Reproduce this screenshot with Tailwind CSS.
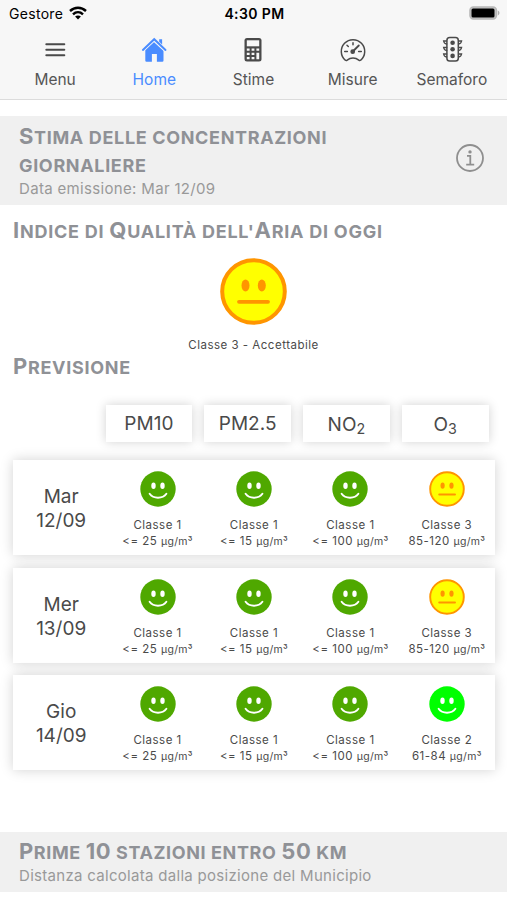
<!DOCTYPE html>
<html lang="it">
<head>
    <meta charset="UTF-8">
    <meta name="viewport" content="width=device-width, initial-scale=1.0">
    <title>Qualità dell'Aria</title>
    <script src="https://cdn.jsdelivr.net/npm/@tailwindcss/browser@4"></script>
</head>
<body class="bg-white font-['Inter','Liberation_Sans',sans-serif] text-[#4a4a4a] h-[900px] overflow-hidden">
    <!-- face symbols -->
    <svg class="hidden">
        <symbol id="happy" viewBox="0 0 36 36">
            <circle cx="18" cy="18" r="17.7" fill="currentColor"/>
            <ellipse cx="13.5" cy="14.7" rx="2.2" ry="3.2" fill="#fff"/>
            <ellipse cx="22.5" cy="14.7" rx="2.2" ry="3.2" fill="#fff"/>
            <path d="M9.6 22.8c3.8 5.2 13 5.2 16.8 0" fill="none" stroke="#fff" stroke-width="1.9" stroke-linecap="round"/>
        </symbol>
        <symbol id="neutral" viewBox="0 0 36 36">
            <circle cx="18" cy="18" r="16.8" fill="#ff0" stroke="#ff9500" stroke-width="1.9"/>
            <ellipse cx="13.6" cy="14.6" rx="2.1" ry="3.2" fill="#ff9500"/>
            <ellipse cx="22.5" cy="14.6" rx="2.1" ry="3.2" fill="#ff9500"/>
            <path d="M10.2 23.5h15.8" stroke="#ff9500" stroke-width="1.9" stroke-linecap="round"/>
        </symbol>
    </svg>

    <header class="h-[100px] bg-[#f7f7f7] border-b border-[#dcdcdc]">
        <div class="grid grid-cols-3 items-center h-7 pl-[9px] pr-[7px] text-black text-sm">
            <div class="flex items-center gap-1.5">
                <span class="tracking-[0.3px]">Gestore</span>
                <svg class="w-[18px] h-[14px] -mt-0.5" viewBox="0 0 18 14" fill="none" stroke="#000" stroke-width="2.4">
                    <path d="M1 5c4.6-4.3 11.4-4.3 16 0"/>
                    <path d="M4 8.3c2.9-2.7 7.1-2.7 10 0"/>
                    <path d="M9 13.5l-2.9-2.9c1.6-1.5 4.2-1.5 5.8 0z" fill="#000" stroke="none"/>
                </svg>
            </div>
            <div class="text-center font-semibold text-sm tracking-[0.4px] whitespace-nowrap">4:30 PM</div>
            <svg class="justify-self-end w-[31px] h-[14px] -mt-0.5" viewBox="0 0 31 14">
                <rect x="1" y="1" width="26.4" height="12" rx="3.4" fill="#c8c8c8" stroke="#b8b8b8" stroke-width="1.6"/>
                <rect x="2.5" y="2.5" width="23" height="9" rx="1.5" fill="#000"/>
                <path d="M28.8 4.6c2.2.8 2.2 4 0 4.8z" fill="#b0b0b0"/>
            </svg>
        </div>
        <nav class="grid grid-cols-5 px-[5.5px] pt-2 text-[15.5px] leading-5 text-[#555]">
            <a href="#" class="flex flex-col items-center gap-1.5">
                <svg class="w-7 h-7" viewBox="0 0 28 28" stroke="#4a4a4a" stroke-width="2" stroke-linecap="round">
                    <path d="M5.3 8.2h18M5.3 13.8h18M5.3 19.2h18"/>
                </svg>
                Menu
            </a>
            <a href="#" class="flex flex-col items-center gap-1.5 text-[#4a8cff]">
                <svg class="w-7 h-7" viewBox="0 0 28 28" fill="#4a8cff">
                    <path d="M14 5.3l9.5 8.6v10.6q0 1.2-1.2 1.2h-5.4v-7.8h-5v7.8H6.5q-1.2 0-1.2-1.2V13.9z"/>
                    <path d="M19.2 3.2h2.9v5.2l-2.9-2.6z"/>
                    <path d="M2.3 14.9L14 4.2l11.7 10.7" fill="none" stroke="#f7f7f7" stroke-width="3"/>
                    <path d="M2.9 13.9L14.2 3.2l11.3 10.7" fill="none" stroke="#4a8cff" stroke-width="2" stroke-linecap="round"/>
                </svg>
                Home
            </a>
            <a href="#" class="flex flex-col items-center gap-1.5">
                <svg class="w-7 h-7" viewBox="0 0 28 28">
                    <rect x="5.5" y="2" width="17" height="23.5" rx="2.5" fill="#4a4a4a"/>
                    <path d="M7.8 4.3h12.4v6H7.8z" fill="#f7f7f7"/>
                    <g fill="#f7f7f7">
                        <path d="M7.8 12.6h2.8v2.2H7.8zM12.6 12.6h2.8v2.2h-2.8zM17.4 12.6h2.8v2.2h-2.8z"/>
                        <path d="M7.8 16.7h2.8v2.2H7.8zM12.6 16.7h2.8v2.2h-2.8zM17.4 16.7h2.8v6.5h-2.8z"/>
                        <path d="M7.8 20.9h2.8v2.3H7.8zM12.6 20.9h2.8v2.3h-2.8z"/>
                    </g>
                </svg>
                Stime
            </a>
            <a href="#" class="flex flex-col items-center gap-1.5">
                <svg class="w-7 h-7" viewBox="0 0 28 28" fill="none" stroke="#4a4a4a" stroke-width="1.5" stroke-linecap="round">
                    <path d="M6.3 24.2a11.7 11.7 0 1 1 15.4 0q-.9.6-1.9-.1c-3.4-2.7-8.2-2.7-11.6 0q-1 .7-1.9.1z"/>
                    <path d="M14 6.7v2M8 9.3l1.3 1.2M5.7 15.5h2.7M19.6 15.5h2.7"/>
                    <path d="M19.8 9.5l-6 6" stroke-width="1.8"/>
                    <circle cx="13.7" cy="15.7" r="1.6" fill="#4a4a4a"/>
                </svg>
                Misure
            </a>
            <a href="#" class="flex flex-col items-center gap-1.5">
                <svg class="w-7 h-7" viewBox="0 0 28 28" fill="none" stroke="#4a4a4a" stroke-width="1.5" stroke-linecap="round">
                    <rect x="8.9" y="1.6" width="11.4" height="23.4" rx="2.8"/>
                    <g fill="#4a4a4a" stroke="none">
                        <circle cx="14.6" cy="6.7" r="2.3"/>
                        <circle cx="14.6" cy="13.3" r="2.3"/>
                        <circle cx="14.6" cy="19.9" r="2.3"/>
                    </g>
                    <path d="M8.7 5H5.6q.4 2.6 3.1 3M8.7 11.5H5.6q.4 2.6 3.1 3M8.7 18H5.6q.4 2.6 3.1 3" stroke-width="1.3"/>
                    <path d="M20.5 5h3.1q-.4 2.6-3.1 3M20.5 11.5h3.1q-.4 2.6-3.1 3M20.5 18h3.1q-.4 2.6-3.1 3" stroke-width="1.3"/>
                </svg>
                Semaforo
            </a>
        </nav>
    </header>

    <section class="flex items-center justify-between mt-4 h-[89px] bg-[#f0f0f0] pl-[19px] pr-[22px] text-[#8f9196]">
        <div class="pt-px">
            <h2 class="w-[340px] text-[18px] leading-7 font-bold tracking-[0.65px] uppercase"><span class="text-[22px] leading-none">S</span>tima delle concentrazioni giornaliere</h2>
            <p class="-mt-px text-[15px] leading-5 tracking-[0.33px] text-[#999]">Data emissione: Mar 12/09</p>
        </div>
        <svg class="w-[30px] h-[30px] -mt-1.5" viewBox="0 0 30 30" fill="none" stroke="#8f8f8f" stroke-width="1.8">
            <circle cx="15" cy="15" r="13"/>
            <path d="M12 12.9h3.3v8.4M11.2 21.7h8"/>
            <circle cx="15" cy="8.9" r="1.7" fill="#8f8f8f" stroke="none"/>
        </svg>
    </section>

    <main class="px-[13px]">
        <h2 class="mt-[13px] text-[18px] leading-7 font-bold tracking-[0.75px] uppercase text-[#8f9196] whitespace-nowrap"><span class="text-[22px] leading-none">I</span>ndice di <span class="text-[22px] leading-none">Q</span>ualità dell'<span class="text-[22px] leading-none">A</span>ria di oggi</h2>
        <div class="flex flex-col items-center mt-3">
            <svg class="w-[67px] h-[67px]" viewBox="0 0 67 67">
                <circle cx="33.5" cy="33.5" r="31.3" fill="#ff0" stroke="#ff9500" stroke-width="4"/>
                <ellipse cx="25.5" cy="27.5" rx="4" ry="6" fill="#ff9500"/>
                <ellipse cx="41.8" cy="27.5" rx="4" ry="6" fill="#ff9500"/>
                <path d="M19 43.8h29" stroke="#ff9500" stroke-width="3.8" stroke-linecap="round"/>
            </svg>
            <p class="mt-3 text-[11.5px] leading-4 tracking-[0.5px]">Classe 3 - Accettabile</p>
        </div>
        <h2 class="mt-px text-[18px] leading-7 font-bold tracking-[0.7px] uppercase text-[#8f9196]"><span class="text-[22px] leading-none">P</span>revisione</h2>

        <div class="grid grid-cols-4 gap-3 mt-[23px] ml-[92.5px] mr-[5.5px] text-[19px]">
            <div class="flex items-center justify-center h-[37px] pt-0.5 bg-white shadow-[0_0_10px_rgba(0,0,0,0.18)]">PM10</div>
            <div class="flex items-center justify-center h-[37px] pt-0.5 bg-white shadow-[0_0_10px_rgba(0,0,0,0.18)]">PM2.5</div>
            <div class="flex items-center justify-center h-[37px] pt-[3px] bg-white shadow-[0_0_10px_rgba(0,0,0,0.18)]"><span>NO<sub>2</sub></span></div>
            <div class="flex items-center justify-center h-[37px] pt-[3px] bg-white shadow-[0_0_10px_rgba(0,0,0,0.18)]"><span>O<sub>3</sub></span></div>
        </div>

        <div id="forecast" class="flex flex-col gap-[12.5px] mt-[18px] -mr-px"></div>
    </main>

    <section class="mt-[62px] h-[60px] pt-[7px] bg-[#f0f0f0] pl-[19px] text-[#8f9196]">
        <h2 class="text-[18px] leading-7 font-bold tracking-[0.6px] uppercase whitespace-nowrap"><span class="text-[22px] leading-none">P</span>rime <span class="text-[22px] leading-none">10</span> stazioni entro <span class="text-[22px] leading-none">50</span> km</h2>
        <p class="-mt-px text-[15px] leading-[19px] tracking-[0.3px] text-[#999]">Distanza calcolata dalla posizione del Municipio</p>
    </section>

    <script>
        const faces = {
            1: { icon: 'happy', color: 'text-[#4fa800]' },
            2: { icon: 'happy', color: 'text-[#00ff00]' },
            3: { icon: 'neutral', color: 'text-[#ff9500]' }
        };

        const days = [
            { day: 'Mar', date: '12/09', values: [[1, '<= 25'], [1, '<= 15'], [1, '<= 100'], [3, '85-120']] },
            { day: 'Mer', date: '13/09', values: [[1, '<= 25'], [1, '<= 15'], [1, '<= 100'], [3, '85-120']] },
            { day: 'Gio', date: '14/09', values: [[1, '<= 25'], [1, '<= 15'], [1, '<= 100'], [2, '61-84']] }
        ];

        document.getElementById('forecast').innerHTML = days.map(d => `
            <div class="grid grid-cols-5 h-[95px] bg-white shadow-[0_0_12px_rgba(0,0,0,0.18)]">
                <div class="flex flex-col items-center justify-center text-[19px] leading-6 pt-[3px]">
                    <span>${d.day}</span>
                    <span>${d.date}</span>
                </div>
                ${d.values.map(([level, range]) => `
                    <div class="flex flex-col items-center pt-[11px] text-[11.5px] leading-4 tracking-[0.5px] whitespace-nowrap">
                        <svg class="w-9 h-9 mb-2.5 ${faces[level].color}"><use href="#${faces[level].icon}"/></svg>
                        <span>Classe ${level}</span>
                        <span>${range.replace('<', '&lt;')} <span class="text-[10.5px] tracking-[0.3px]">µg/m³</span></span>
                    </div>
                `).join('')}
            </div>
        `).join('');
    </script>
</body>
</html>
